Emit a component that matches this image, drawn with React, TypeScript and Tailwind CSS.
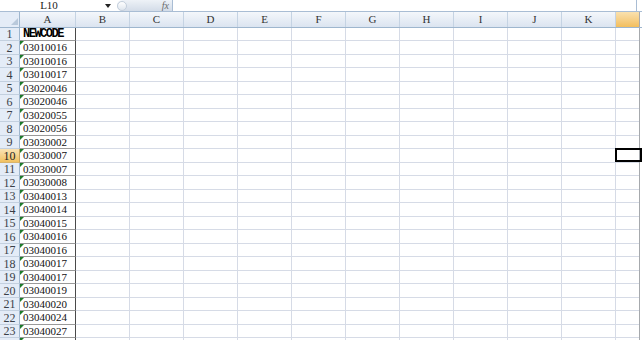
import React from 'react'

const codes = [
  'NEWCODE', '03010016', '03010016', '03010017', '03020046', '03020046', '03020055', '03020056',
  '03030002', '03030007', '03030007', '03030008', '03040013', '03040014', '03040015', '03040016',
  '03040016', '03040017', '03040017', '03040019', '03040020', '03040024', '03040027', '',
]

const cols = ['B', 'C', 'D', 'E', 'F', 'G', 'H', 'I', 'J', 'K']

const serif = { fontFamily: '"Liberation Serif", "Noto Sans CJK SC", serif' }

function Row({ n, value }: { n: number; value: string }) {
  const selected = n === 10
  const tall = n % 2 === 0
  const last = n === 24
  return (
    <div className={`flex shrink-0 ${tall ? 'h-[14px]' : 'h-[13px]'}`}>
      {/* row header */}
      <div
        className={`w-[20px] shrink-0 flex items-center justify-center border-r border-b text-[12px] leading-none ${selected ? 'bg-gradient-to-b from-[#fae3b4] to-[#f1c15f] border-r-[#c2a25e] border-b-[#d8b46c] text-[#222]' : 'bg-[#e4ecf7] border-r-[#9eb6ce] border-b-[#c3d0df] text-[#3a3f47]'}`}
      >
        {last ? '' : n}
      </div>
      {/* column A */}
      <div className="relative w-[56px] shrink-0 flex items-center pl-[3px] border-r border-r-[#4a4a4a] border-b border-b-[#9a9a9a]">
        {n > 1 && (
          <div className="absolute left-0 top-0 w-0 h-0 border-t-[4px] border-t-[#1d7a2a] border-r-[4px] border-r-transparent" />
        )}
        {n === 1 ? (
          <span
            className="text-[12px] font-bold leading-none tracking-[-1.5px] text-black"
            style={{ fontFamily: '"Liberation Mono", monospace' }}
          >
            {value}
          </span>
        ) : (
          <span className="text-[11px] leading-none text-[#111]">{value}</span>
        )}
      </div>
      {cols.map((c) => (
        <div key={c} className="w-[54px] shrink-0 border-r border-b border-[#d6dbe6]" />
      ))}
      {/* column L */}
      <div className="relative w-[23px] shrink-0 border-b border-[#d6dbe6]">
        {selected && (
          <div className="absolute -left-px -top-px -right-[3px] bottom-0 border-2 border-black" />
        )}
      </div>
      <div className="w-px shrink-0 bg-[#a6a9ad]" />
      <div className="flex-1 bg-white" />
    </div>
  )
}

export default function App() {
  return (
    <div className="w-[642px] h-[340px] overflow-hidden bg-white flex flex-col" style={serif}>
      {/* formula bar */}
      <div className="h-[12px] shrink-0 flex items-stretch border-b border-[#a9bdd4] bg-white">
        <div className="w-[98px] shrink-0 flex items-center justify-center text-[11px] leading-none text-[#222]">
          L10
        </div>
        <div className="w-[19px] shrink-0 flex items-center justify-start pl-[7px]">
          <svg width="6" height="4" viewBox="0 0 6 4">
            <path d="M0 0 L6 0 L3 4 Z" fill="#222" />
          </svg>
        </div>
        <div className="w-[56px] shrink-0 flex items-center justify-between rounded-l-full bg-gradient-to-b from-[#eef2f7] to-[#d3dce8] border-r border-[#a9bdd4] pr-[3px]">
          <div className="w-[10px] h-[10px] rounded-full bg-gradient-to-b from-white to-[#dfe6ee] border border-[#c4cfdc]" />
          <span className="text-[10px] italic leading-none text-[#6b6b6b]">fx</span>
        </div>
        <div className="w-[464px] shrink-0 border-r border-[#a9bdd4]" />
        <div className="flex-1" />
      </div>
      {/* column headers */}
      <div className="h-[16px] shrink-0 flex border-b border-[#9eb6ce]">
        <div className="w-[20px] shrink-0 flex items-end justify-end pr-[1px] pb-[2px] bg-[#e4ecf7] border-r border-[#9eb6ce]">
          <svg width="7" height="7" viewBox="0 0 7 7">
            <path d="M7 0 L7 7 L0 7 Z" fill="#b9c9db" />
          </svg>
        </div>
        <div className="w-[56px] shrink-0 flex items-center justify-center bg-gradient-to-b from-[#f4f7fb] to-[#dbe4f0] border-r border-[#c5d3e3] text-[11px] leading-none text-[#333]">
          A
        </div>
        {cols.map((c) => (
          <div
            key={c}
            className="w-[54px] shrink-0 flex items-center justify-center bg-gradient-to-b from-[#f4f7fb] to-[#dbe4f0] border-r border-[#c5d3e3] text-[11px] leading-none text-[#333]"
          >
            {c}
          </div>
        ))}
        <div className="w-[23px] shrink-0 bg-gradient-to-b from-[#fae1ae] to-[#f2be5c]" />
        <div className="w-px shrink-0 bg-[#a6a9ad]" />
        <div className="flex-1 bg-white" />
      </div>
      {codes.map((v, i) => (
        <Row key={i} n={i + 1} value={v} />
      ))}
    </div>
  )
}
